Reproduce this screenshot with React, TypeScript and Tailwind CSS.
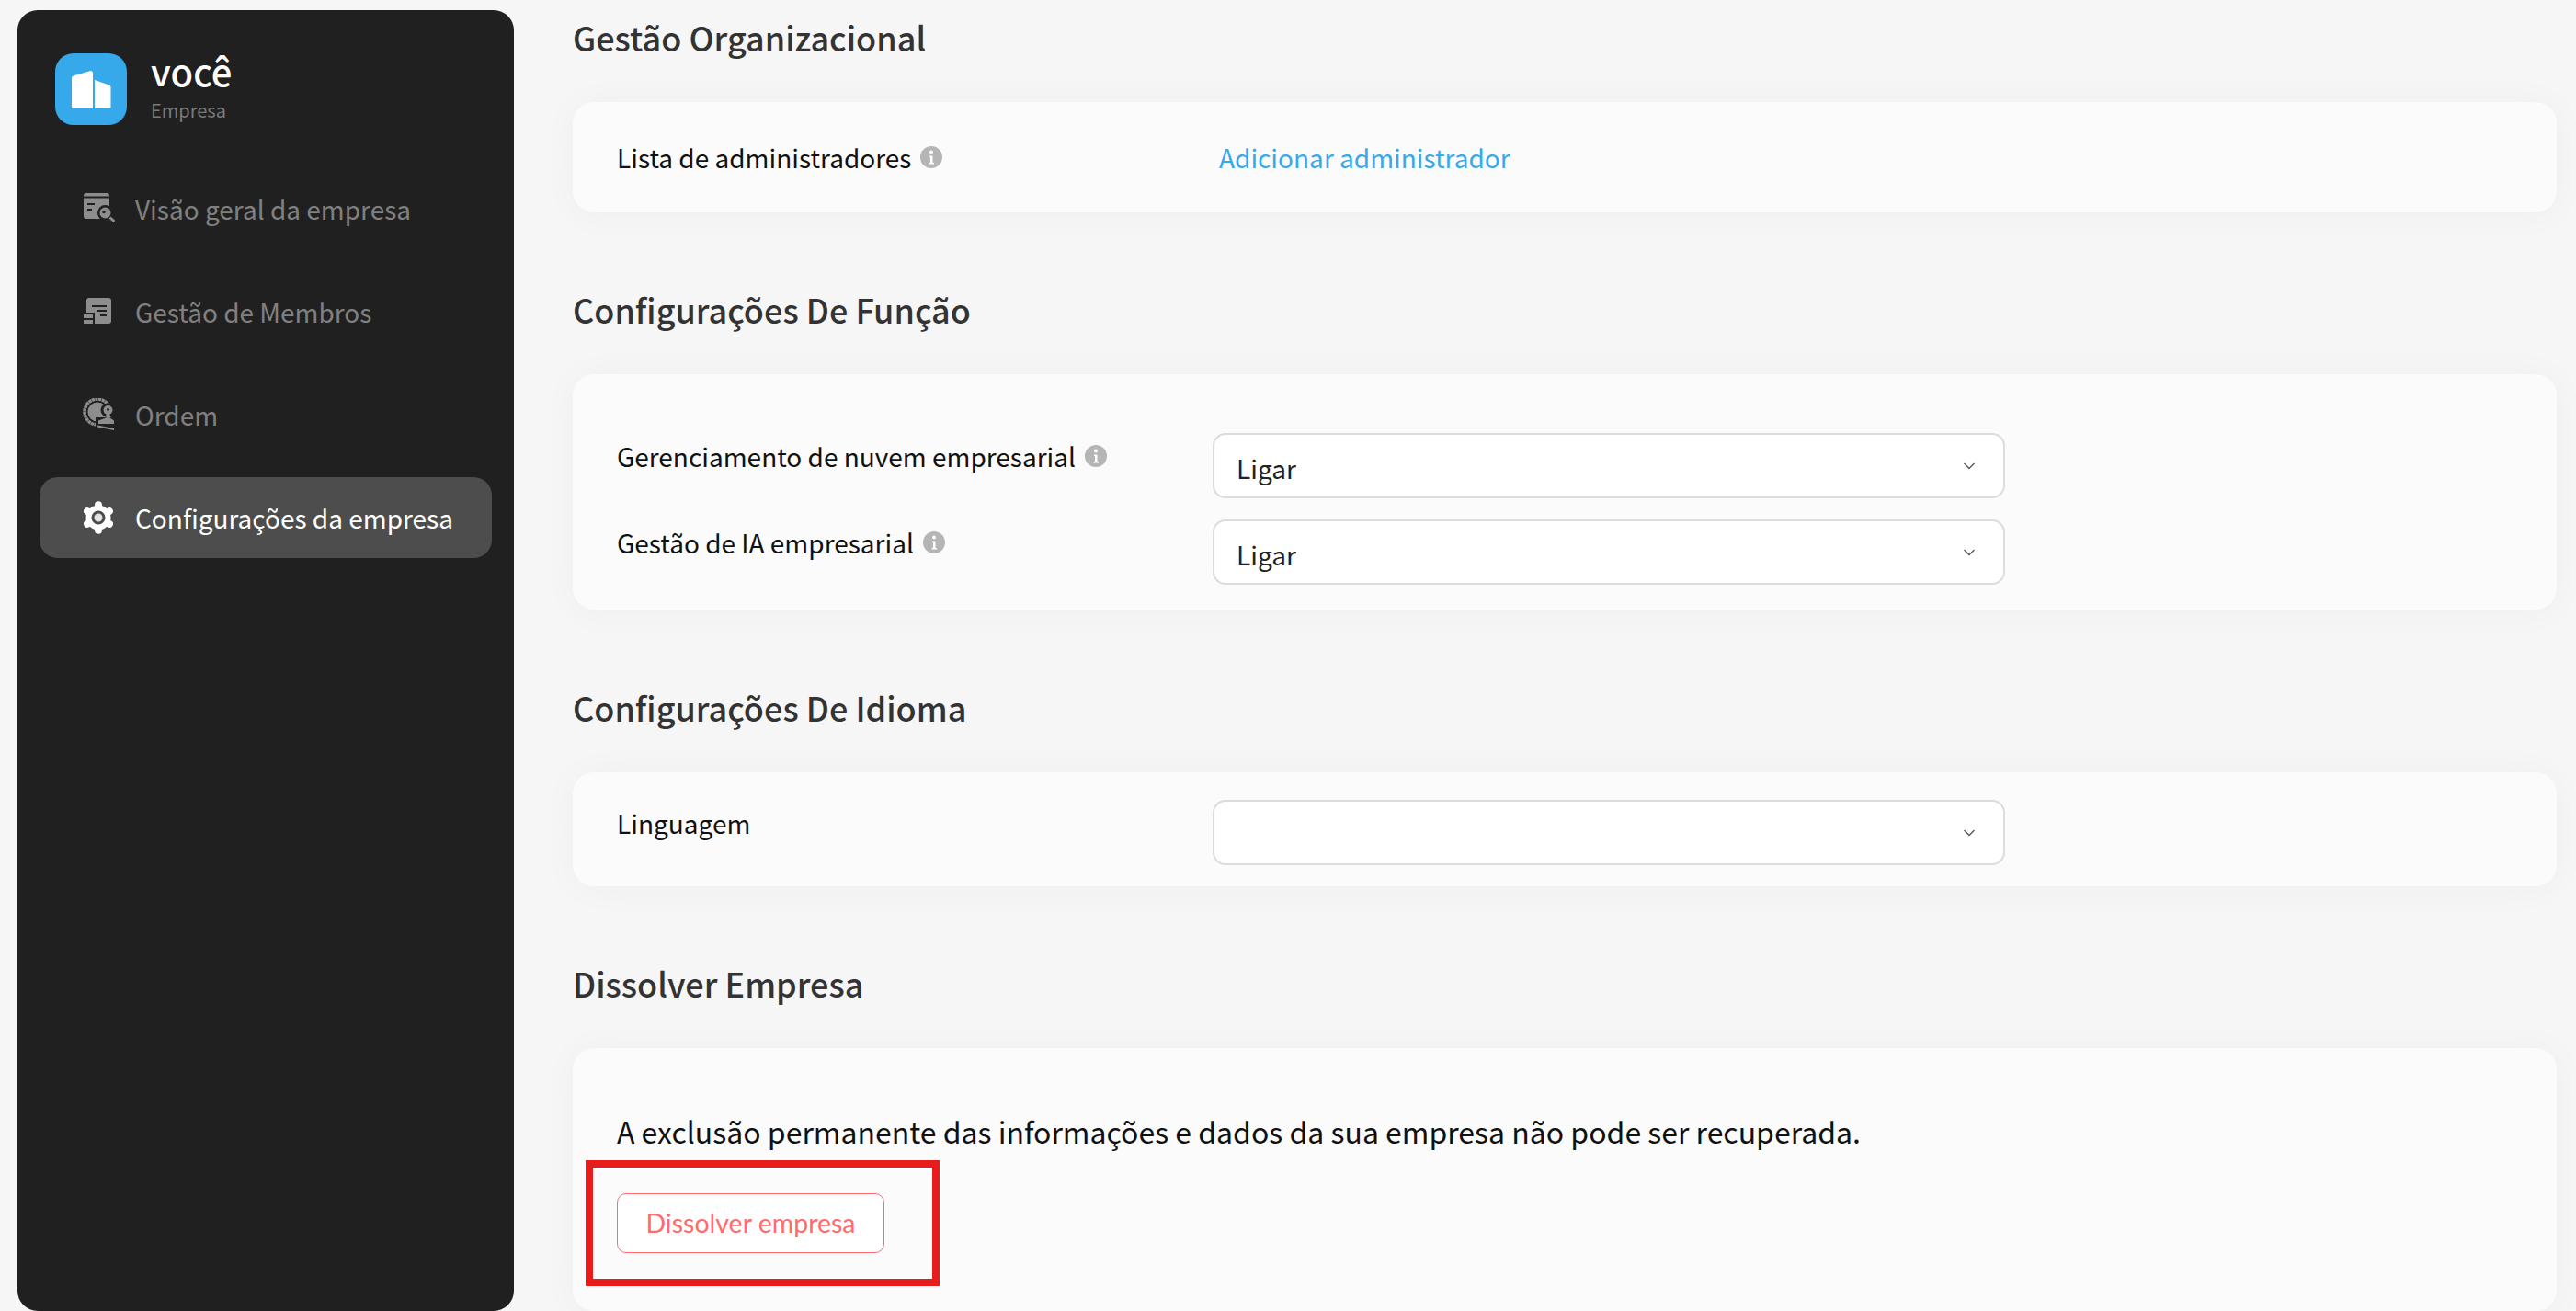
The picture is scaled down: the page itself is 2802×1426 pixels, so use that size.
import React from "react";

const FONT = "font-['Noto_Sans_CJK_SC','Noto_Sans',sans-serif]";

function LogoIcon() {
  return (
    <div className="flex h-[78px] w-[78px] shrink-0 items-center justify-center rounded-[20px] bg-[#35a9ea]">
      <svg viewBox="0 0 78 78" className="h-[78px] w-[78px]" fill="#fff">
        <path d="M18 27c0-1.200.7-2.200 1.800-2.600l18-5.200c1.500-.4 3.200.6 3.200 2.300V60H19.500c-.8 0-1.500-.7-1.500-1.500V27z" />
        <path d="M43 29l15.700 5.400c1.100.4 1.800 1.400 1.800 2.500v21.600c0 .8-.7 1.500-1.500 1.500H43V29z" />
      </svg>
    </div>
  );
}

function OverviewIcon() {
  return (
    <svg viewBox="0 0 36 36" className="h-9 w-9 shrink-0">
      <path d="M2 6.500h28V26a3 3 0 0 1-3 3H5a3 3 0 0 1-3-3V6.500z" fill="#8d8d8d" />
      <path d="M2 4.500V4a3 3 0 0 1 3-3h22a3 3 0 0 1 3 3v.5H2z" fill="#8d8d8d" />
      <path d="M6 13h8M6 19h5" stroke="#202020" strokeWidth="2" />
      <circle cx="25.500" cy="22.500" r="8.500" fill="#202020" />
      <circle cx="25.500" cy="22.500" r="6" fill="#8d8d8d" />
      <circle cx="24" cy="21.500" r="1.800" fill="#202020" />
      <path d="M30.500 27.500l5 4.500" stroke="#8d8d8d" strokeWidth="3" />
    </svg>
  );
}

function MembersIcon() {
  return (
    <svg viewBox="0 0 36 36" className="h-9 w-9 shrink-0">
      <path d="M5 6a3 3 0 0 1 3-3h21a3 3 0 0 1 3 3v22a3 3 0 0 1-3 3H5V6z" fill="#8d8d8d" />
      <path d="M0 19h14v14H0z" fill="#202020" />
      <path d="M2 21h10v4H2zM2 27h10v4H2z" fill="#8d8d8d" />
      <path d="M11 12h16M16 17h11M20 22h7" stroke="#202020" strokeWidth="2" />
    </svg>
  );
}

function OrderIcon() {
  return (
    <svg viewBox="0 0 36 36" className="h-9 w-9 shrink-0">
      <circle cx="17" cy="15" r="14" fill="none" stroke="#8d8d8d" strokeWidth="3.500" strokeDasharray="3.200 0.500" />
      <circle cx="17" cy="15" r="10.500" fill="#8d8d8d" />
      <circle cx="28" cy="13" r="7.500" fill="#202020" />
      <path d="M15 21h21v14H15z" fill="#202020" />
      <circle cx="28.500" cy="13" r="5" fill="#8d8d8d" />
      <circle cx="28.500" cy="12.500" r="1.400" fill="#202020" />
      <path d="M26.500 16h4v5.500l4.500 3V28H18v-3.500l8.500-3V16z" fill="#8d8d8d" />
      <path d="M17 30.500l18 3.500" stroke="#8d8d8d" strokeWidth="1.800" />
    </svg>
  );
}

function GearIcon() {
  const teeth = [0, 60, 120, 180, 240, 300];
  return (
    <svg viewBox="0 0 36 36" className="h-9 w-9 shrink-0">
      <circle cx="18" cy="18" r="13.500" fill="#fff" />
      {teeth.map((a) => (
        <path key={a} d="M18 4.200V7" stroke="#fff" strokeWidth="8" strokeLinecap="round" transform={`rotate(${a} 18 18)`} />
      ))}
      <circle cx="18" cy="18" r="6" fill="#e4e4e4" stroke="#4d4d4d" strokeWidth="3" />
    </svg>
  );
}

function InfoIcon() {
  return (
    <svg viewBox="0 0 24 24" className="h-6 w-6 shrink-0">
      <circle cx="12" cy="12" r="12" fill="#b5b5b5" />
      <circle cx="12" cy="6.500" r="2" fill="#fff" />
      <path d="M10 10.500h3.500V18H15v1.500H9.500V18H11v-6h-1z" fill="#fff" />
    </svg>
  );
}

function Chevron() {
  return (
    <svg viewBox="0 0 14 8" className="h-2 w-3.5 shrink-0" fill="none">
      <path d="M1.500 1l5.500 5.500L12.500 1" stroke="#555" strokeWidth="1.300" />
    </svg>
  );
}

function Select({ value }: { value?: string }) {
  return (
    <div className="flex h-[71px] w-[862px] items-center justify-between rounded-[14px] border-2 border-[#dcdcdc] bg-white pl-6 pr-[30px]">
      <span className="pt-1 text-[28px] leading-none text-[#222]">{value}</span>
      <Chevron />
    </div>
  );
}

function Card({ className, children }: { className: string; children: React.ReactNode }) {
  return <div className={`rounded-[23px] bg-[#fbfbfb] pl-12 shadow-[0_2px_40px_rgba(0,0,0,0.035)] ${className}`}>{children}</div>;
}

function Section({ title, className, children }: { title: string; className?: string; children: React.ReactNode }) {
  return (
    <section className={`flex flex-col gap-[27px] ${className ?? ""}`}>
      <h2 className="h-[84px] text-[36px] font-medium leading-[81px] text-[#333]">{title}</h2>
      {children}
    </section>
  );
}

function SettingRow({ label, info, value }: { label: string; info?: boolean; value?: string }) {
  return (
    <div className="flex items-start">
      <div className="flex h-[50px] w-[648px] items-center gap-2.5 text-[28px] text-[#111]">
        <span>{label}</span>
        {info && <InfoIcon />}
      </div>
      <Select value={value} />
    </div>
  );
}

const NAV = [
  { label: "Visão geral da empresa", icon: <OverviewIcon /> },
  { label: "Gestão de Membros", icon: <MembersIcon /> },
  { label: "Ordem", icon: <OrderIcon /> },
  { label: "Configurações da empresa", icon: <GearIcon />, active: true },
];

function Sidebar() {
  return (
    <aside className="mt-[11px] h-[1415px] w-[540px] shrink-0 rounded-[22px] bg-[#202020] px-6 pt-[47px]">
      <div className="flex items-start gap-[26px] pl-[17px]">
        <LogoIcon />
        <div className="flex flex-col">
          <span className="mt-[-5px] text-[40px] font-medium leading-[48px] text-white">você</span>
          <span className="mt-[5px] text-[20px] leading-[28px] text-[#7a7a7a]">Empresa</span>
        </div>
      </div>
      <nav className="mt-[47px] flex flex-col gap-6">
        {NAV.map((item) => (
          <div
            key={item.label}
            className={`flex h-[88px] items-center gap-[22px] rounded-[20px] pl-[46px] text-[28px] ${item.active ? "bg-[#4d4d4d] text-white" : "text-[#808080]"}`}
          >
            {item.icon}
            <span>{item.label}</span>
          </div>
        ))}
      </nav>
    </aside>
  );
}

export default function App() {
  return (
    <div className={`flex h-[1426px] w-[2802px] gap-16 overflow-hidden bg-[#f6f6f6] pl-[19px] ${FONT}`}>
      <Sidebar />
      <main className="flex w-[2158px] shrink-0 flex-col gap-[65px]">
        <Section title="Gestão Organizacional">
          <Card className="flex h-[120px] items-center">
            <div className="flex w-[648px] items-center gap-2.5 text-[28px] text-[#111]">
              <span>Lista de administradores</span>
              <InfoIcon />
            </div>
            <span className="pl-[7px] text-[28px] text-[#38a9e8]">Adicionar administrador</span>
          </Card>
        </Section>
        <Section title="Configurações De Função">
          <Card className="flex h-[256px] flex-col gap-[23px] pt-16">
            <SettingRow label="Gerenciamento de nuvem empresarial" info value="Ligar" />
            <SettingRow label="Gestão de IA empresarial" info value="Ligar" />
          </Card>
        </Section>
        <Section title="Configurações De Idioma" className="mt-px">
          <Card className="h-[124px] pt-[30px]">
            <SettingRow label="Linguagem" />
          </Card>
        </Section>
        <Section title="Dissolver Empresa">
          <Card className="relative h-[286px] pt-[68px]">
            <p className="text-[32px] leading-[44px] text-[#111]">A exclusão permanente das informações e dados da sua empresa não pode ser recuperada.</p>
            <button className="mt-[46px] flex h-[65px] w-[291px] items-center justify-center rounded-[10px] border border-[#ff6b6b] bg-white font-['Lato',sans-serif] text-[28.5px] text-[#ff6b6b]">
              Dissolver empresa
            </button>
            <div className="absolute left-[14px] top-[122px] h-[137px] w-[385px] border-8 border-[#e71c1c]" />
          </Card>
        </Section>
      </main>
    </div>
  );
}
